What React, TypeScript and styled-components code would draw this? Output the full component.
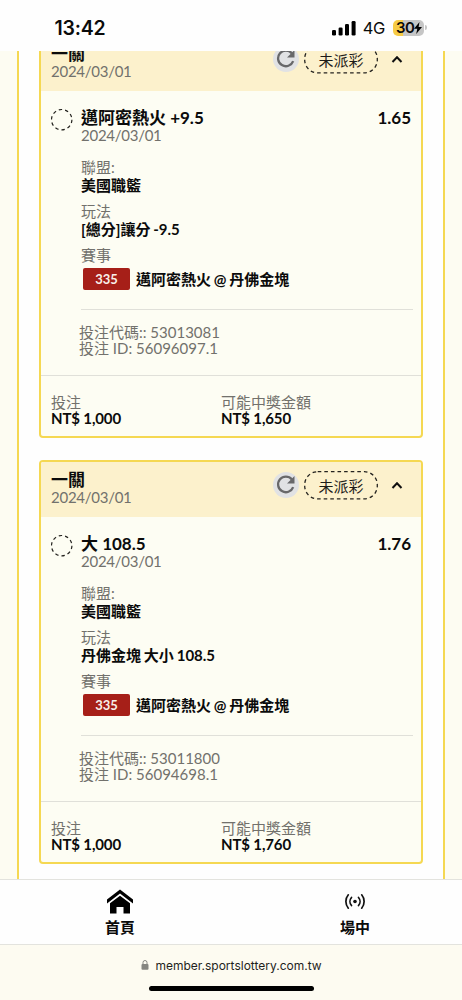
import React from "react";
import styled, { createGlobalStyle } from "styled-components";

const GlobalStyle = createGlobalStyle`
  * { box-sizing: border-box; }
  body {
    margin: 0;
    background: #fdfcf2;
    color: #0b0b0b;
    font-family: Lato, "Noto Sans CJK TC", sans-serif;
  }
`;

const Screen = styled.div`
  width: 462px;
  height: 1000px;
  display: flex;
  flex-direction: column;
  overflow: hidden;
`;

const StatusBar = styled.header`
  flex: none;
  height: 51px;
  padding: 4px 35px 0 54.5px;
  display: flex;
  align-items: center;
  justify-content: space-between;
  background: #fefefe;
  font-family: Inter, sans-serif;
`;

const Clock = styled.span`
  font-size: 19.5px;
  font-weight: 600;
  letter-spacing: -0.2px;
`;

const StatusIcons = styled.div`
  display: flex;
  align-items: center;
`;

const Network = styled.span`
  margin: 1px 8px 0 7px;
  font-size: 16.5px;
  line-height: 18px;
  letter-spacing: -0.4px;
`;

const Battery = styled.div`
  width: 31px;
  height: 16px;
  padding-left: 3px;
  border-radius: 5px;
  display: flex;
  align-items: center;
  background: linear-gradient(90deg, #f6cb45 10px, #c6c6c6 10px);
  font-size: 15px;
  font-weight: 600;
  letter-spacing: -0.5px;
`;

const BatteryCap = styled.span`
  width: 2px;
  height: 5px;
  margin-left: 1px;
  border-radius: 0 2px 2px 0;
  background: #c6c6c6;
`;

const Scroller = styled.main`
  flex: none;
  height: 828px;
  padding: 0 17px;
  overflow: hidden;
`;

const Panel = styled.section`
  height: 828px;
  padding: 0 20px;
  display: flex;
  flex-direction: column;
  gap: 22px;
  border: solid #f5d852;
  border-width: 0 2px;
  background: #fefefe;
`;

const Card = styled.article`
  flex: none;
  height: 404px;
  border: 2px solid #f5d852;
  border-radius: 4px;
  background: #fdfdf3;
  overflow: hidden;
  &:first-child { margin-top: -17px; }
`;

const CardHead = styled.div`
  height: 55px;
  padding: 8px 18px 0 10px;
  display: flex;
  align-items: flex-start;
  background: #fcf1cc;
`;

const HeadTitle = styled.div`
  height: 19px;
  line-height: 20px;
  font-size: 17px;
  font-weight: 700;
`;

const DateText = styled.div`
  height: 16px;
  line-height: 16px;
  font-size: 15px;
  letter-spacing: -0.26px;
  color: #72716c;
`;

const HeadActions = styled.div`
  margin-left: auto;
  display: flex;
  align-items: center;
`;

const Refresh = styled.button`
  width: 26px;
  height: 26px;
  padding: 0;
  border: 0;
  border-radius: 50%;
  display: grid;
  place-items: center;
  background: #e1e2e4;
`;

const Status = styled.div`
  width: 74px;
  height: 29px;
  margin: 1px 13px 0 5px;
  display: grid;
  svg, span { grid-area: 1 / 1; }
  span {
    line-height: 30px;
    text-align: center;
    font-size: 15px;
    color: #1c1b18;
  }
`;

const Body = styled.div`
  padding: 16px 10px 0;
  display: grid;
  grid-template-columns: 30px 1fr auto;
`;

const Details = styled.div`
  grid-column: 2 / 4;
`;

const TitleRow = styled.div`
  height: 20px;
  display: flex;
  justify-content: space-between;
  line-height: 21px;
  font-size: 17px;
  font-weight: 700;
`;

const Fields = styled.dl`
  margin: 16px 0 0;
  display: grid;
  row-gap: 8px;
`;

const Label = styled.dt`
  height: 16px;
  line-height: 16px;
  font-size: 15px;
  color: #72716c;
`;

const Value = styled.dd`
  height: 20px;
  margin: 0;
  line-height: 20px;
  font-size: 15px;
  font-weight: 700;
  word-spacing: -0.8px;
`;

const Match = styled.dd`
  height: 22px;
  margin: 5px 0 0 2px;
  display: flex;
  align-items: center;
  gap: 6px;
  line-height: 22px;
  font-size: 15px;
  font-weight: 700;
  word-spacing: -0.8px;
`;

const Code = styled.span`
  width: 47px;
  height: 22px;
  border-radius: 2px;
  background: #a61f18;
  color: #f8efe9;
  font-size: 13px;
  text-align: center;
`;

const Ids = styled.div`
  margin: 19px -2px 0 0;
  padding-top: 14px;
  height: 66px;
  border-top: 1px solid #e0e0d9;
  line-height: 16px;
  font-size: 15px;
  color: #72716c;
  div { height: 16px; margin-left: -2px; }
`;

const Foot = styled.div`
  padding: 18px 10px 0;
  display: grid;
  grid-template-columns: 170px 1fr;
  border-top: 1px solid #e0e0d9;
`;

const Amount = styled.div`
  height: 17px;
  line-height: 17px;
  font-size: 15px;
  font-weight: 700;
  letter-spacing: -0.14px;
`;

const TabBar = styled.nav`
  flex: none;
  height: 66px;
  padding: 0 3px;
  display: grid;
  grid-template-columns: 234px 236px;
  border: solid #e3e3de;
  border-width: 1px 0;
  background: #fefefe;
`;

const Tab = styled.a`
  display: flex;
  flex-direction: column;
  align-items: center;
  font-size: 15px;
  font-weight: 700;
  line-height: 20px;
`;

const TabIcon = styled.div`
  height: 37px;
  padding-top: 9px;
`;

const Browser = styled.footer`
  flex: 1;
  padding-top: 10px;
  display: flex;
  flex-direction: column;
  align-items: center;
  background: #fdfbf1;
`;

const Address = styled.div`
  height: 20px;
  display: flex;
  align-items: center;
  gap: 6px;
  padding-left: 1px;
  font-family: Inter, sans-serif;
  font-size: 12px;
  color: #1f1f1d;
`;

const HomeIndicator = styled.div`
  width: 165px;
  height: 5px;
  margin-top: 11px;
  border-radius: 3px;
  background: #000;
`;

interface Bet {
  title: string;
  odds: string;
  play: string;
  code: string;
  id: string;
  win: string;
}

const bets: Bet[] = [
  { title: "邁阿密熱火 +9.5", odds: "1.65", play: "[總分]讓分 -9.5", code: "53013081", id: "56096097.1", win: "NT$ 1,650" },
  { title: "大 108.5", odds: "1.76", play: "丹佛金塊 大小 108.5", code: "53011800", id: "56094698.1", win: "NT$ 1,760" },
];

const BetCard = ({ bet }: { bet: Bet }) => (
  <Card>
    <CardHead>
      <div>
        <HeadTitle>一關</HeadTitle>
        <DateText>2024/03/01</DateText>
      </div>
      <HeadActions>
        <Refresh aria-label="refresh">
          <svg width="20" height="20" viewBox="0 0 20 20">
            <path d="M15.9 4.400A7.800 7.800 0 1 0 17.200 12.200" fill="none" stroke="#68686a" strokeWidth="2.300" />
            <path d="M18.500 1v7.500h-7.500z" fill="#68686a" />
          </svg>
        </Refresh>
        <Status>
          <svg width="74" height="29">
            <rect x=".7" y=".7" width="72.6" height="27.2" rx="13" fill="none" stroke="#24231f" strokeWidth="1.3" strokeDasharray="3.6 3" />
          </svg>
          <span>未派彩</span>
        </Status>
        <svg width="12" height="9" viewBox="0 0 12 9">
          <path d="M1.5 7 6 2.3 10.500 7" fill="none" stroke="#111" strokeWidth="2" />
        </svg>
      </HeadActions>
    </CardHead>
    <Body>
      <svg width="22" height="24" viewBox="0 0 22 24">
        <circle cx="10.700" cy="12.700" r="10.200" fill="none" stroke="#24231f" strokeWidth="1.2" strokeDasharray="3.400 3" />
      </svg>
      <Details>
        <TitleRow>
          <span>{bet.title}</span>
          <span>{bet.odds}</span>
        </TitleRow>
        <DateText>2024/03/01</DateText>
        <Fields>
          <div>
            <Label>聯盟:</Label>
            <Value>美國職籃</Value>
          </div>
          <div>
            <Label>玩法</Label>
            <Value>{bet.play}</Value>
          </div>
          <div>
            <Label>賽事</Label>
            <Match>
              <Code>335</Code>
              <span>邁阿密熱火 @ 丹佛金塊</span>
            </Match>
          </div>
        </Fields>
        <Ids>
          <div>投注代碼:: {bet.code}</div>
          <div>投注 ID: {bet.id}</div>
        </Ids>
      </Details>
    </Body>
    <Foot>
      <div>
        <Label as="div">投注</Label>
        <Amount>NT$ 1,000</Amount>
      </div>
      <div>
        <Label as="div">可能中獎金額</Label>
        <Amount>{bet.win}</Amount>
      </div>
    </Foot>
  </Card>
);

export default function App() {
  return (
    <Screen>
      <GlobalStyle />
      <StatusBar>
        <Clock>13:42</Clock>
        <StatusIcons>
          <svg width="24" height="16" viewBox="0 0 24 16">
            <rect x="0" y="10" width="4" height="5.500" rx="1.300" />
            <rect x="6.600" y="7.500" width="4" height="8" rx="1.300" />
            <rect x="13" y="4" width="4" height="11.500" rx="1.300" />
            <rect x="19.600" y="1" width="4" height="14.500" rx="1.300" />
          </svg>
          <Network>4G</Network>
          <Battery>
            30
            <svg width="8" height="12" viewBox="0 0 8 12">
              <path d="M5.500 0 0 6.800h3.300L2.200 12 8 5H4.600z" />
            </svg>
          </Battery>
          <BatteryCap />
        </StatusIcons>
      </StatusBar>
      <Scroller>
        <Panel>
          {bets.map((bet) => (
            <BetCard key={bet.id} bet={bet} />
          ))}
        </Panel>
      </Scroller>
      <TabBar>
        <Tab>
          <TabIcon>
            <svg width="28" height="26" viewBox="0 0 28 26">
              <path d="M1 10.500 14 .5l13 10v4L14 4.500 1 14.500z" />
              <path d="M4 14.200 14 6.800l10 7.400V24.500h-6.500V18h-7v6.500H4z" />
            </svg>
          </TabIcon>
          首頁
        </Tab>
        <Tab>
          <TabIcon>
            <svg width="20" height="26" viewBox="0 0 20 26" fill="none" stroke="#111" strokeWidth="1.700" strokeLinecap="round">
              <circle cx="10" cy="12.500" r="1.800" fill="#111" stroke="none" />
              <path d="M6.500 8.500a6 6 0 0 0 0 8M13.500 8.500a6 6 0 0 1 0 8M3.300 5.800a10.500 10.500 0 0 0 0 13.400M16.700 5.800a10.500 10.500 0 0 1 0 13.400" />
            </svg>
          </TabIcon>
          場中
        </Tab>
      </TabBar>
      <Browser>
        <Address>
          <svg width="8" height="10" viewBox="0 0 8 10">
            <rect x=".5" y="4" width="7" height="5.800" rx="1" fill="#858580" />
            <path d="M2 4.500V2.500a2 2 0 0 1 4 0v2" fill="none" stroke="#858580" />
          </svg>
          member.sportslottery.com.tw
        </Address>
        <HomeIndicator />
      </Browser>
    </Screen>
  );
}
